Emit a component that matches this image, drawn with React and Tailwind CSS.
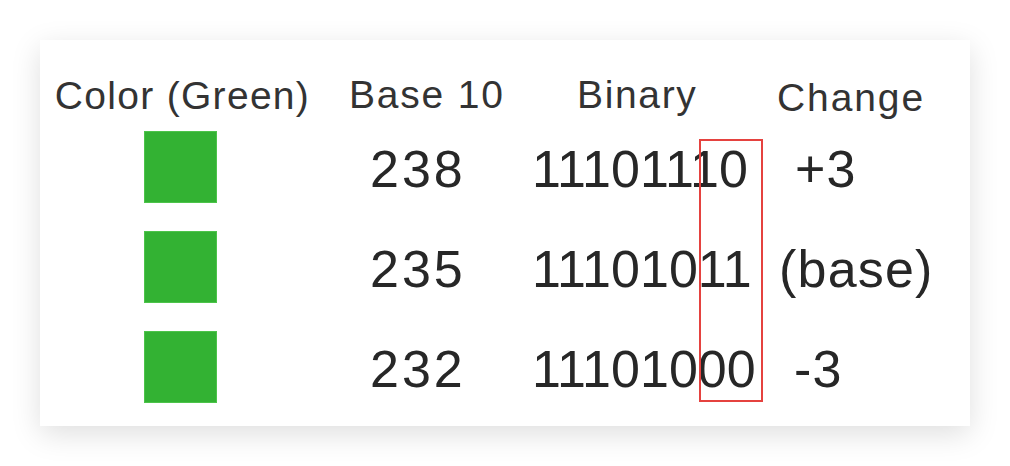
import React from 'react';

const rows = [
  { dec: '238', bin: '11101110', change: '+3', changePad: 'pl-[20px]' },
  { dec: '235', bin: '11101011', change: '(base)', changePad: 'pl-[4px]' },
  { dec: '232', bin: '11101000', change: '-3', changePad: 'pl-[19px]' },
];

export default function App() {
  return (
    <div className="w-[1010px] h-[466px] bg-white pt-[40px] pl-[40px] font-[family-name:Liberation_Sans,Arial,sans-serif]">
      <div className="relative w-[930px] h-[386px] bg-white shadow-[0_8px_28px_rgba(0,0,0,0.13)]">
        <div className="grid grid-cols-[285px_195px_255px_195px] grid-rows-[76px_100px_100px_100px] text-[#272727]">
          {/* Header row */}
          <div className="pt-[36px] text-center text-[39px] leading-none tracking-[1.3px] text-[#333]">Color (Green)</div>
          <div className="pt-[35px] pl-[24px] text-[39px] leading-none tracking-[1.8px] text-[#333]">Base 10</div>
          <div className="pt-[35px] pl-[57px] text-[39px] leading-none tracking-[1.65px] text-[#333]">Binary</div>
          <div className="pt-[38px] pl-[2px] text-[39px] leading-none tracking-[1.9px] text-[#333]">Change</div>

          {rows.map((r) => (
            <React.Fragment key={r.dec}>
              <div className="flex justify-center pt-[15px] pr-[4px]">
                <div className="w-[73px] h-[72px] bg-[#33b233] border border-[#4cc44a]" />
              </div>
              <div className="pt-[27px] pl-[45px] text-[52px] leading-none tracking-[3px]">{r.dec}</div>
              <div className="pt-[27px] pl-[12px] text-[52px] leading-none">{r.bin}</div>
              <div className={`pt-[27px] ${r.changePad} text-[52px] leading-none tracking-[1.2px]`}>{r.change}</div>
            </React.Fragment>
          ))}
        </div>

        {/* Highlight around the last two bits */}
        <div className="absolute left-[659px] top-[99px] w-[64px] h-[263px] border-2 border-[#e5423f]" />
      </div>
    </div>
  );
}
